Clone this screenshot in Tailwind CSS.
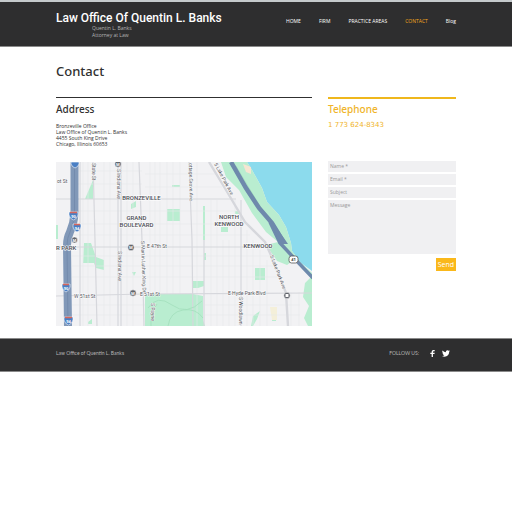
<!DOCTYPE html>
<html lang="en">
  <head>
    <meta charset="UTF-8" />
    <meta name="viewport" content="width=device-width, initial-scale=1.0" />
    <title>Contact | Law Office Of Quentin L. Banks</title>
    <script src="https://cdn.jsdelivr.net/npm/@tailwindcss/browser@4"></script>
  </head>
  <body class="bg-white text-[#303030] font-['Open_Sans',sans-serif]">
    <header class="bg-[#2e2e2f] border-t-2 border-b border-t-[#c5cacc] border-b-[#8a8a8a]">
      <div class="max-w-[400px] mx-auto h-11 flex items-start justify-between">
        <div class="pt-[10px]">
          <p class="font-['Roboto',sans-serif] text-[12px] leading-[13px] font-medium text-white whitespace-nowrap">Law Office Of Quentin L. Banks</p>
          <p class="pl-9 text-[5px] leading-[7px] text-[#b5b5b5]">Quentin L. Banks<br />Attorney at Law</p>
        </div>
        <nav class="flex gap-[18px] pt-4 text-[5px] leading-[7px] text-white whitespace-nowrap">
          <a href="#">HOME</a>
          <a href="#">FIRM</a>
          <a href="#">PRACTICE AREAS</a>
          <a href="#" class="text-[#f5a81c]">CONTACT</a>
          <a href="#">Blog</a>
        </nav>
      </div>
    </header>

    <main class="max-w-[400px] mx-auto pt-4 pb-3">
      <h1 class="font-['Noto_Sans',sans-serif] text-[13px] leading-[16px] font-medium">Contact</h1>

      <div class="grid grid-cols-[2fr_1fr] gap-4 mt-[18px]">
        <section class="border-t border-[#303030]">
          <h2 class="mt-1 font-['Noto_Sans',sans-serif] text-[10px] leading-[15px] font-medium">Address</h2>
          <address class="mt-[6px] not-italic text-[5px] leading-[6px]">
            Bronzeville Office<br />
            Law Office of Quentin L. Banks<br />
            4455 South King Drive<br />
            Chicago, Illinois 60653
          </address>

          <svg class="w-full mt-[15px]" viewBox="56 162 256 164" role="img" aria-label="Map of Bronzeville, Chicago">
            <rect x="56" y="162" width="256" height="164" fill="#f2f2f4" />
            <!-- lake -->
            <path d="M247 162 252 170 262 188 267 202 279 215 286 227 291 243 292 251 301 263 312 271V162Z" fill="#8cdbed" />
            <!-- parks -->
            <g fill="#b9edd0">
              <path d="M221 162H247L252 170 262 188 267 202 279 215 286 227 291 243 292 251 301 263 312 273V279L294 260 287 265 277 261 266 245 278 242 266 232 252 213 239 190 226 177Z" />
              <path d="M93 180V199H85Z" />
              <path d="M84 243H91L96 257 104 260V270L96 268 94 263 83 263Z" />
              <path d="M131 204 136 201V207L131 209Z" />
              <rect x="167" y="209" width="13" height="12" />
              <path d="M145 294H193L203 296V320L205 326H145Z" />
              <path d="M192 281H204V286L198 288H192Z" />
              <path d="M203 206H205V240H203ZM221 227H228V232H221ZM235 211H240V214H235Z" />
              <path d="M255 268H265V280H255Z" />
              <path d="M253 316 260 311 257 319 253 326H251ZM272 315H276V321H272Z" />
              <path d="M305 283 312 276V326H308L304 318 309 306 303 297Z" />
              <path d="M56 225H58V239H56ZM172 185H180V187H172ZM88 322 92 319V324H88ZM132 272H136L134 276Z" />
              <path d="M204 253H206V260H204Z" />
            </g>
            <path d="M243 164 251 167V174L246 172Z" fill="#f6e5d2" />
            <path d="M270 307H277V320H272Z" fill="#f4efd9" />
            <!-- side streets -->
            <g stroke="#e6e7eb" stroke-width="0.6" fill="none">
              <path d="M83 162V326M88 162V326M104 162V326M110 162V326M127 162V326M133 162V326M150 162V294M155 162V294M160 162V294M167 162V294M173 162V294M180 162V294M197 162V326M211 200V326M217 200V326M223 240V326M229 240V326M235 200V326M247 230V326M253 240V326M260 250V326M267 260V326M291 292V326M299 292V326" />
              <path d="M78 171H142M78 184H142M78 211H240M75 224H240M72 235H250M72 256H275M72 266H275M72 277H280M72 305H145M72 315H145M145 174H215M145 187H222M205 305H300M205 315H300" />
            </g>
            <!-- main streets -->
            <g stroke="#d6d7dc" stroke-width="1.2" fill="none">
              <path d="M56 199H215L236 199M56 247H269M56 296 145 294 312 293" />
              <path d="M93 162 95 240 97 326M118 162V326M139 162 142 240 144 326M189 162 192 240 193 326M204 240V326M241 200V326M80 162V326M121 162V326" />
              <path d="M209 162 226 190 245 222 265 242 274 262 286 293 288 326" stroke-width="2.4" />
            </g>
            <!-- park paths -->
            <g stroke="#9fdcb9" stroke-width="0.7" fill="none">
              <path d="M148 308Q157 294 172 305T202 301M151 326Q150 314 157 304M168 326Q170 312 183 310T203 318M236 166 249 188 263 211 281 240M241 176 251 197 270 218" />
            </g>
            <!-- expressways -->
            <path d="M74.500 162V213Q74 223 70 232Q67 238 67 245L68 326" fill="none" stroke="#8198b8" stroke-width="8" />
            <path d="M74.500 162V213Q74 223 70 232Q67 238 67 245L68 326" fill="none" stroke="#748bad" stroke-width="1" />
            <path d="M231 162 246 188 259 208 272 223 284 243" fill="none" stroke="#6e89ac" stroke-width="4.500" />
            <path d="M270 222 280 243 294 258 313 278" fill="none" stroke="#6e89ac" stroke-width="3.500" />
            <path d="M270 218 288 244H279Z" fill="#6e89ac" />
            <!-- route shields -->
            <g>
              <g fill="#4a7fc4" stroke="#ffffff" stroke-width="0.6">
                <path d="M71 162H79V164Q78 167 75 168Q72 167 71 164Z" />
                <path d="M69 212H78V215Q77 219 73.500 220Q70 219 69 215Z" />
                <path d="M73 224H81V227Q80 231 77 232Q74 231 73 227Z" />
                <path d="M62 284H70V287Q69 291 66 292Q63 291 62 287Z" />
                <path d="M64 317H73V320Q72 324 68.500 325Q65 324 64 320Z" />
              </g>
              <path d="M70 212.500H77M74 224.500H80M63 284.500H69M65 317.500H72" stroke="#d7665c" stroke-width="1.4" />
              <g font-size="4" font-weight="700" fill="#ffffff" text-anchor="middle">
                <text x="73.500" y="217.500">90</text>
                <text x="77" y="229.500">94</text>
                <text x="66" y="289.500">90</text>
                <text x="68.500" y="322.500">94</text>
              </g>
              <rect x="289" y="256" width="9" height="7" rx="2.500" fill="#ffffff" stroke="#555555" stroke-width="0.8" />
              <text x="293.500" y="261.300" font-size="4" font-weight="700" text-anchor="middle" fill="#444444">41</text>
            </g>
            <!-- transit stops -->
            <g fill="#62656d" stroke="#ffffff" stroke-width="0.5">
              <circle cx="118" cy="164" r="3.200" />
              <circle cx="74.500" cy="240" r="3" />
              <circle cx="131" cy="247.500" r="3.200" />
              <circle cx="133" cy="293" r="3.200" />
              <circle cx="287" cy="295.500" r="3.200" />
            </g>
            <g font-size="4" font-weight="700" fill="#ffffff" text-anchor="middle">
              <text x="118" y="165.500">M</text>
              <text x="74.500" y="241.500">M</text>
              <text x="131" y="249">M</text>
              <text x="133" y="294.500">M</text>
            </g>
            <rect x="285.500" y="294" width="3" height="3" rx="0.500" fill="#ffffff" />
            <!-- neighbourhoods -->
            <g class="font-['Roboto',sans-serif] font-medium" font-size="6" fill="#4a4c52" stroke="#ffffff" stroke-width="1" paint-order="stroke" text-anchor="middle">
              <text x="141.500" y="200">BRONZEVILLE</text>
              <text x="136.500" y="220">GRAND</text>
              <text x="136.500" y="227">BOULEVARD</text>
              <text x="229" y="219">NORTH</text>
              <text x="229" y="226">KENWOOD</text>
              <text x="258" y="248">KENWOOD</text>
              <text x="56" y="250" text-anchor="start">R PARK</text>
            </g>
            <!-- street names -->
            <g class="font-['Roboto',sans-serif]" font-size="5" fill="#54565c" stroke="#ffffff" stroke-width="0.8" paint-order="stroke">
              <text x="147" y="248">E 47th St</text>
              <text x="140" y="296">E 51st St</text>
              <text x="74" y="298">W 51st St</text>
              <text x="57" y="183">ot St</text>
              <text x="228" y="295">E Hyde Park Blvd</text>
              <text transform="translate(92 163) rotate(90)">State St</text>
              <text transform="translate(117 169) rotate(90)">S Indiana Ave</text>
              <text transform="translate(118 251) rotate(90)">S Indiana Ave</text>
              <text transform="translate(141 241) rotate(88)">S Martin Luther King Dr</text>
              <text transform="translate(189 163) rotate(89)">ottage Grove Ave</text>
              <text transform="translate(214 164) rotate(62)">S Lake Park Ave</text>
              <text transform="translate(270 256) rotate(69)">S Lake Park Ave</text>
              <text transform="translate(239 297) rotate(90)">S Woodlawn</text>
              <text transform="translate(151 303) rotate(90)">S Payne</text>
            </g>
          </svg>
        </section>

        <section class="border-t-2 border-[#efb71c]">
          <h2 class="mt-[3px] font-['Noto_Sans',sans-serif] text-[10px] leading-[15px] font-medium text-[#f0b429]">Telephone</h2>
          <p class="mt-1 text-[7px] leading-[8px] text-[#f0b429] font-['DejaVu_Sans',sans-serif]">1 773 624-8343</p>

          <form class="mt-8 flex flex-col gap-[2px] text-[5px] leading-[7px]">
            <input type="text" aria-label="Name" placeholder="Name *" class="w-full h-[11px] px-[2px] pb-[2px] bg-[#f0f0f2] placeholder:text-[#999999]" />
            <input type="email" aria-label="Email" placeholder="Email *" class="w-full h-[11px] px-[2px] pb-[2px] bg-[#f0f0f2] placeholder:text-[#999999]" />
            <input type="text" aria-label="Subject" placeholder="Subject" class="w-full h-[11px] px-[2px] pb-[2px] bg-[#f0f0f2] placeholder:text-[#999999]" />
            <textarea aria-label="Message" placeholder="Message" class="w-full h-[54px] px-[2px] py-[2px] resize-none bg-[#f0f0f2] placeholder:text-[#999999]"></textarea>
            <button type="button" class="self-end mt-[2px] h-[13px] px-[2px] bg-[#fab81a] text-white text-[7px]">Send</button>
          </form>
        </section>
      </div>
    </main>

    <footer class="bg-[#2e2e2f] border-y border-[#8a8a8a]">
      <div class="max-w-[400px] mx-auto h-8 flex items-center justify-between pb-1 font-['Lato',sans-serif] text-[5px] leading-[7px] text-[#b5b5b5]">
        <p>Law Office of Quentin L. Banks</p>
        <div class="flex items-center gap-[7px] pr-[6px]">
          <p class="pr-1">FOLLOW US:</p>
          <a href="#" aria-label="Facebook">
            <svg class="h-[7px] w-[5px]" viewBox="0 0 10 16" fill="#ffffff"><path d="M3 16V9H0V6H3V4Q3 0 7 0H10V3H8Q6 3 6 4.500V6H10L9.500 9H6V16Z" /></svg>
          </a>
          <a href="#" aria-label="Twitter">
            <svg class="h-[7px] w-[8px]" viewBox="0 0 24 20" fill="#ffffff"><path d="M24 2.400a10 10 0 0 1-2.800.8A5 5 0 0 0 23.300.500a10 10 0 0 1-3.100 1.200 4.900 4.900 0 0 0-8.400 4.500A14 14 0 0 1 1.700 1a4.900 4.900 0 0 0 1.500 6.600A5 5 0 0 1 1 7v.1A4.900 4.900 0 0 0 4.900 12a5 5 0 0 1-2.200.1 4.900 4.900 0 0 0 4.600 3.400A10 10 0 0 1 0 17.500a14 14 0 0 0 7.500 2.200c9.100 0 14.300-7.700 14-14.600A10 10 0 0 0 24 2.400Z" /></svg>
          </a>
        </div>
      </div>
    </footer>
  </body>
</html>
